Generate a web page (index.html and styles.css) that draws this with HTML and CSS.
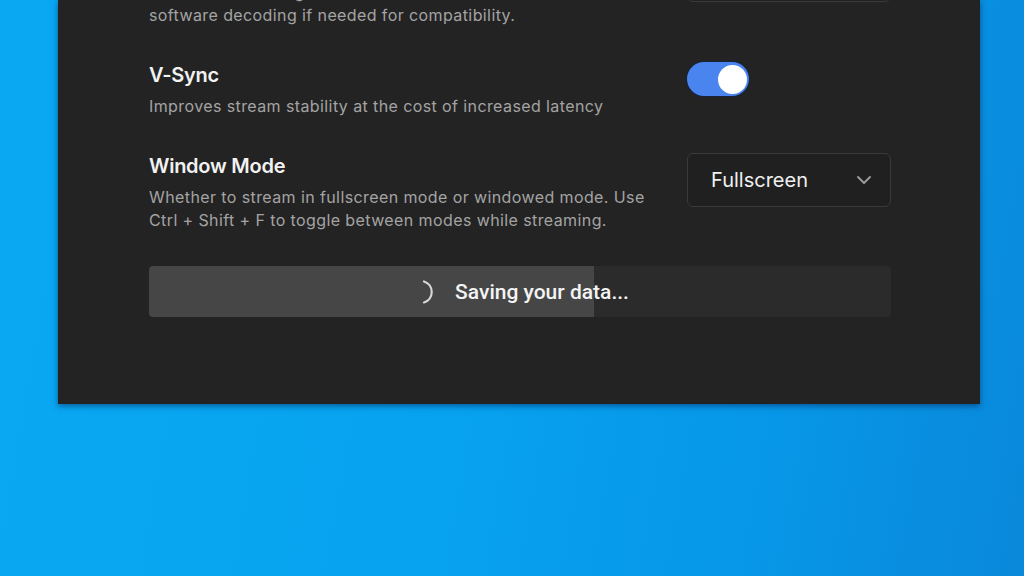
FILE: index.html
```html
<!DOCTYPE html>
<html lang="en">
<head>
<meta charset="utf-8">
<title>Settings</title>
<link rel="stylesheet" href="styles.css">
</head>
<body>
<div class="desktop">
  <div class="window">
    <div class="content">
      <div class="row">
        <div class="text">
          <div class="title">Hardware Decoding</div>
          <div class="desc">Hardware decoding reduces load. Disable to use<br>software decoding if needed for compatibility.</div>
        </div>
        <div class="control">
          <div class="select"><span>Automatic</span>
            <svg class="chev" width="16" height="10" viewBox="0 0 16 10"><path d="M2 2l6 6 6-6" fill="none" stroke="#9b9b9b" stroke-width="2" stroke-linecap="round" stroke-linejoin="round"/></svg>
          </div>
        </div>
      </div>
      <div class="row">
        <div class="text">
          <div class="title">V-Sync</div>
          <div class="desc">Improves stream stability at the cost of increased latency</div>
        </div>
        <div class="control">
          <div class="toggle"><div class="knob"></div></div>
        </div>
      </div>
      <div class="row">
        <div class="text">
          <div class="title">Window Mode</div>
          <div class="desc">Whether to stream in fullscreen mode or windowed mode. Use Ctrl + Shift + F to toggle between modes while streaming.</div>
        </div>
        <div class="control">
          <div class="select"><span>Fullscreen</span>
            <svg class="chev" width="16" height="10" viewBox="0 0 16 10"><path d="M2 2l6 6 6-6" fill="none" stroke="#9b9b9b" stroke-width="2" stroke-linecap="round" stroke-linejoin="round"/></svg>
          </div>
        </div>
      </div>
      <div class="progress">
        <div class="fill" style="width: 60%"></div>
        <div class="label">
          <svg class="spinner" width="16" height="26" viewBox="0 0 16 26"><path d="M3 2.5a11 11 0 0 1 0 21" fill="none" stroke="#d8d8d8" stroke-width="2.2" stroke-linecap="round"/></svg>
          <span>Saving your data...</span>
        </div>
      </div>
    </div>
  </div>
</div>
</body>
</html>
```
FILE: styles.css
```css
html, body {
  margin: 0;
  padding: 0;
  width: 1024px;
  height: 576px;
  overflow: hidden;
}
.desktop {
  width: 1024px;
  height: 576px;
  background: linear-gradient(100deg, #0aa8f2 0%, #07a3f0 45%, #0797e8 75%, #0a88da 100%);
  font-family: Inter, "Noto Sans", sans-serif;
}
.window {
  margin-left: 58px;
  width: 922px;
  height: 404px;
  background: #232323;
  box-shadow: 0 2px 6px rgba(0, 30, 80, 0.55);
  display: flex;
  flex-direction: column;
  justify-content: flex-end;
  overflow: hidden;
}
.content {
  margin: 0 89px 87px 91px;
  display: flex;
  flex-direction: column;
  gap: 34px;
}
.row {
  display: flex;
  justify-content: space-between;
  align-items: flex-start;
}
.text {
  width: 520px;
}
.title {
  font-size: 20px;
  font-weight: 600;
  line-height: 28px;
  color: #f2f2f2;
  margin-bottom: 6px;
  letter-spacing: -0.25px;
}
.desc {
  font-size: 16px;
  line-height: 23px;
  color: #a3a3a3;
  letter-spacing: 0.4px;
}
.control {
  width: 204px;
  padding-top: 1px;
}
.select {
  box-sizing: border-box;
  height: 54px;
  border: 1px solid #3a3a3a;
  border-radius: 6px;
  background: #202020;
  display: flex;
  align-items: center;
  justify-content: space-between;
  padding: 0 18px 0 23px;
  color: #f0f0f0;
  font-size: 20px;
}
.toggle {
  width: 62px;
  height: 34px;
  border-radius: 17px;
  background: #4a84ee;
  box-shadow: 0 0 0 1px #16233a;
  display: flex;
  align-items: center;
  justify-content: flex-end;
  padding: 0 2px;
  box-sizing: border-box;
}
.knob {
  width: 29px;
  height: 29px;
  border-radius: 50%;
  background: #ffffff;
}
.progress {
  height: 51px;
  border-radius: 4px;
  background: #2b2b2b;
  display: grid;
  overflow: hidden;
}
.fill {
  grid-area: 1 / 1;
  background: #464646;
  height: 100%;
}
.label {
  grid-area: 1 / 1;
  display: flex;
  align-items: center;
  justify-content: center;
  gap: 18px;
  color: #f4f4f4;
  font-family: Roboto, "Noto Sans", sans-serif;
  font-weight: 500;
  font-size: 21px;
  padding-left: 10px;
}
.spinner {
  display: block;
}
```
